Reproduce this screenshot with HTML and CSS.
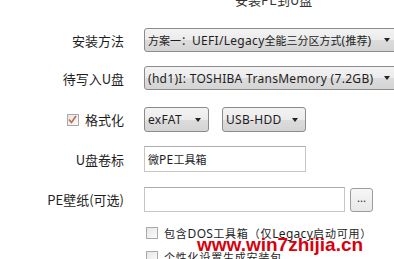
FILE: index.html
```html
<!DOCTYPE html>
<html lang="zh-CN">
<head>
  <meta charset="UTF-8" />
  <meta name="viewport" content="width=device-width, initial-scale=1.0"/>
  <title>安装PE到U盘</title>
  <link rel="stylesheet" href="styles.css">
</head>
<body>

  <div class="dialog">
    <div class="title">安装PE到U盘</div>

    <div class="row row-first">
      <div class="label">安装方法</div>
      <div class="field">
        <div class="combo combo-wide">
          <span class="combo-text"><span class="cjk">方案一：</span>UEFI/Legacy<span class="cjk">全能三分区方式</span>(<span class="cjk">推荐</span>)</span>
          <span class="arrow"></span>
        </div>
      </div>
    </div>

    <div class="row">
      <div class="label">待写入U盘</div>
      <div class="field">
        <div class="combo combo-wide">
          <span class="combo-text">(hd1)I: TOSHIBA TransMemory (7.2GB)</span>
          <span class="arrow"></span>
        </div>
      </div>
    </div>

    <div class="row row-format">
      <div class="label">
        <span class="check checked">
          <svg width="9" height="9" viewBox="0 0 9 9"><path d="M1 4.5 L3.5 7.5 L8 1" fill="none" stroke="#c0694f" stroke-width="1.6"/></svg>
        </span>
        格式化
      </div>
      <div class="field">
        <div class="combo combo-fs">
          <span class="combo-text">exFAT</span>
          <span class="arrow"></span>
        </div>
        <div class="combo combo-mode">
          <span class="combo-text">USB-HDD</span>
          <span class="arrow"></span>
        </div>
      </div>
    </div>

    <div class="row row-volume">
      <div class="label">U盘卷标</div>
      <div class="field">
        <div class="textbox textbox-volume"><span class="cjk">微</span>PE<span class="cjk">工具箱</span></div>
      </div>
    </div>

    <div class="row row-wallpaper">
      <div class="label">PE壁纸(可选)</div>
      <div class="field">
        <div class="textbox textbox-wallpaper"></div>
        <div class="browse">...</div>
      </div>
    </div>

    <div class="row row-option row-dos">
      <div class="label"></div>
      <div class="field">
        <span class="check"></span>
        <span class="option-text"><span class="cjk">包含</span>DOS<span class="cjk">工具箱（仅</span>Legacy<span class="cjk">启动可用）</span></span>
      </div>
    </div>

    <div class="row row-option">
      <div class="label"></div>
      <div class="field">
        <span class="check"></span>
        <span class="option-text"><span class="cjk">个性化设置生成安装包</span></span>
      </div>
    </div>

    <div class="watermark">www.win7zhijia.cn</div>
  </div>

</body>
</html>
```

FILE: styles.css
```css
html, body {
  margin: 0;
  padding: 0;
  background: #fff;
  overflow: hidden;
}

body {
  font-family: "Noto Sans CJK SC", "Noto Sans", sans-serif;
  font-size: 13px;
  color: #1e1e1e;
  width: 394px;
  height: 259px;
}

.dialog {
  position: relative;
  height: 259px;
}

.title {
  margin-top: -9px;
  height: 18px;
  line-height: 18px;
  padding-left: 235px;
  color: #333;
}

.row {
  display: flex;
  align-items: center;
  margin-top: 14px;
}

.row-first {
  margin-top: 19px;
}

.row-format {
  margin-top: 17px;
}

.row-wallpaper {
  margin-top: 15px;
}

.row-option {
  margin-top: 8px;
  height: 16px;
}

.row-dos {
  margin-top: 13px;
}

.label {
  width: 124px;
  flex: none;
  display: flex;
  justify-content: flex-end;
  align-items: center;
  gap: 6px;
  white-space: nowrap;
}

.field {
  margin-left: 20px;
  display: flex;
  align-items: center;
  gap: 13px;
  white-space: nowrap;
}

.combo-text, .textbox, .option-text {
  font-family: "Noto Sans", "Noto Sans CJK SC", sans-serif;
  font-size: 12px;
  letter-spacing: 0.3px;
}

.cjk {
  font-family: "Noto Sans CJK SC", sans-serif;
  font-size: 11px;
  letter-spacing: 0;
}

.option-text .cjk {
  letter-spacing: 0.8px;
}

.combo {
  box-sizing: border-box;
  height: 24px;
  border: 1px solid #8b8b8b;
  border-radius: 3px;
  background: linear-gradient(#f3f3f3, #ebebeb 50%, #dcdcdc 51%, #d4d4d4);
  display: flex;
  align-items: center;
  padding-left: 3px;
  position: relative;
}

.combo-wide {
  width: 260px;
}

.combo-fs {
  width: 65px;
  height: 25px;
}

.combo-mode {
  width: 84px;
  height: 25px;
}

.combo-text {
  flex: 1;
}

.arrow {
  width: 0;
  height: 0;
  border-left: 3.5px solid transparent;
  border-right: 3.5px solid transparent;
  border-top: 4px solid #222;
  margin-right: 7px;
}

.combo-wide .arrow {
  margin-right: 13px;
}

.textbox {
  box-sizing: border-box;
  height: 26px;
  border: 1px solid #c6c6c6;
  border-top-color: #acacac;
  background: #fff;
  display: flex;
  align-items: center;
  padding-left: 3px;
}

.textbox-volume {
  width: 162px;
}

.textbox-wallpaper {
  width: 201px;
  height: 25px;
}

.browse {
  box-sizing: border-box;
  width: 23px;
  height: 24px;
  margin-left: -8px;
  border: 1px solid #9c9c9c;
  border-radius: 3px;
  background: linear-gradient(#f7f7f7, #e8e8e8);
  font-size: 11px;
  line-height: 16px;
  text-align: center;
  color: #333;
}

.check {
  box-sizing: border-box;
  width: 12px;
  height: 12px;
  border: 1px solid #a9a9a9;
  background: linear-gradient(135deg, #e6e6e6, #fbfbfb);
  display: inline-flex;
  align-items: center;
  justify-content: center;
  flex: none;
}

.row-option .check {
  margin-left: 2px;
}

.row-option .field {
  gap: 6px;
}

.watermark {
  position: absolute;
  left: 197px;
  top: 244px;
  font-family: "Liberation Sans", sans-serif;
  font-weight: bold;
  font-size: 19px;
  line-height: 20px;
  color: #d8000c;
}
```
